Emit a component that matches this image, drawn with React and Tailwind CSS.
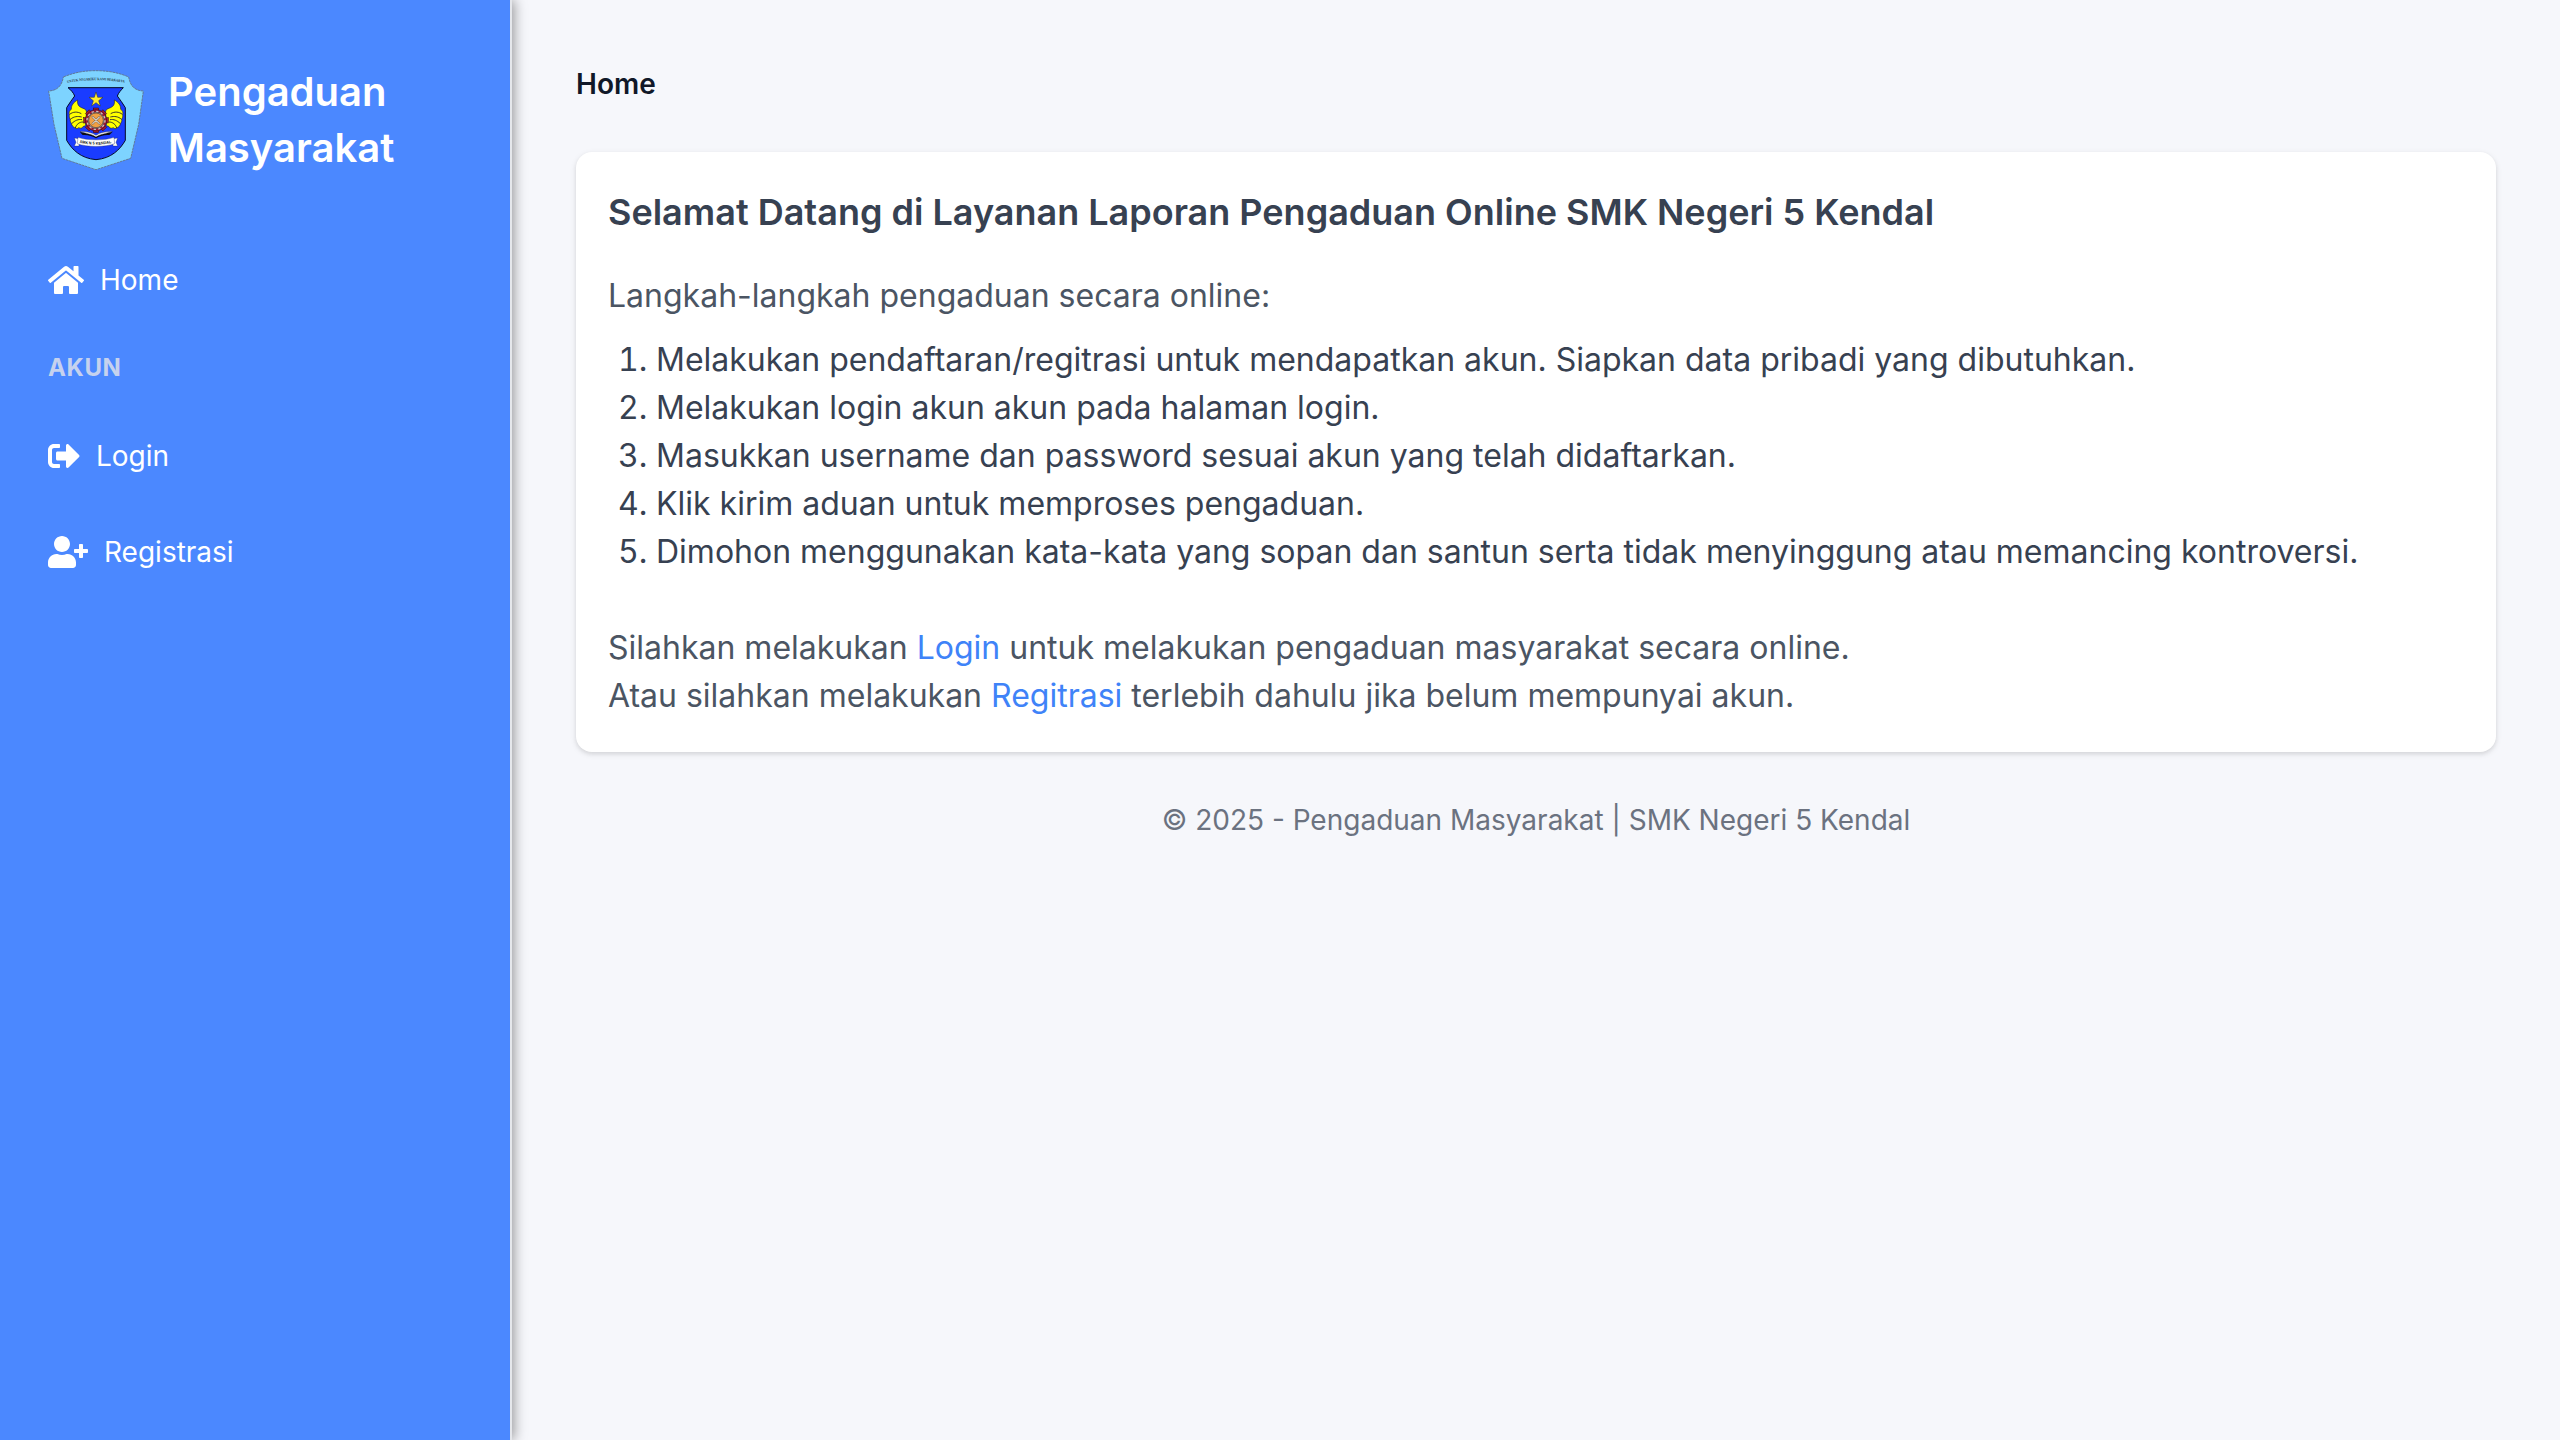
import { FaHome, FaSignOutAlt, FaUserPlus } from "react-icons/fa";

function Feathers() {
  return (
    <g fill="#ffff00" stroke="#1b1b2f" strokeWidth="1.8" strokeLinejoin="round">
      <path d="M113 119 C101 125 93 136 94 147 C88 150 86 157 88 163 C87 168 88 173 91 177 C90 181 91 185 94 189 C95 196 100 200 105 203 C109 206 114 205 116 202 C123 206 128 202 130 198 C136 198 138 193 137 189 L139 162 C140 155 140 148 132 145 C122 141 110 138 113 119 Z" />
      <path d="M89 162 C99 154 112 153 124 160 M91 177 C102 168 113 167 125 170 M95 190 C105 180 115 176 126 178 M106 203 C109 192 118 185 129 185" fill="none" strokeWidth="2.6" />
    </g>
  );
}

function Crest() {
  const teeth = [0, 45, 90, 135, 180, 225, 270, 315];
  return (
    <svg viewBox="24 29 288 300" className="h-[100px] w-24 shrink-0" aria-label="SMK N 5 Kendal">
      <path
        d="M70 50 C102 37 130 31 167 31 C204 31 236 37 266 50 C270 76 284 91 310 92 L296 192 L272 294 L168 328 L66 294 L42 192 L26 92 C52 91 66 76 70 50 Z"
        fill="#7dd3ff"
        stroke="#5f7080"
        strokeWidth="2.4"
        strokeDasharray="8 2"
      />
      <path id="motto" d="M82 68 C130 57 206 57 256 68" fill="none" />
      <text fontSize="11" fontFamily="Liberation Serif, serif" fontWeight="700" fill="#1f3344">
        <textPath href="#motto" textLength="172" lengthAdjust="spacingAndGlyphs">UNTUK NEGARIKU KAMI BERKARYA</textPath>
      </text>
      <path
        d="M84 82 L250 82 C244 88 235 98 232 107 C240 119 249 129 256 142 L256 240 C240 268 214 294 168 298 C122 294 96 268 80 240 L80 142 C87 129 96 119 104 107 C101 98 92 88 84 82 Z"
        fill="#1a3cff"
        stroke="#050a28"
        strokeWidth="3"
      />
      <path d="M168 95 L173 111 L189 111 L176 121 L181 137 L168 127 L155 137 L160 121 L147 111 L163 111 Z" fill="#ffee2e" stroke="#2b2b20" strokeWidth="1.5" />
      <Feathers />
      <g transform="translate(336 0) scale(-1 1)">
        <Feathers />
      </g>
      <g stroke="#1a0a12" strokeWidth="1.5">
        <g fill="#a81c34">
          {teeth.map((a) => (
            <rect key={a} x="160" y="143" width="16" height="12" transform={`rotate(${a} 168 180)`} />
          ))}
        </g>
        <circle cx="168" cy="180" r="32" fill="#a81c34" />
        <circle cx="168" cy="180" r="25" fill="#b9b4b0" />
        <circle cx="168" cy="180" r="22" fill="#f0a044" />
      </g>
      <circle cx="168" cy="180" r="27" fill="none" stroke="#c9c4c0" strokeWidth="4" strokeDasharray="7 7.1" />
      <path d="M158 170 L178 190 M178 170 L158 190" stroke="#7a5a3c" strokeWidth="6" strokeLinecap="round" />
      <path d="M158 170 L178 190 M178 170 L158 190" stroke="#d3cec6" strokeWidth="3.5" strokeLinecap="round" />
      <path d="M120 216 C136 215 156 218 168 226 C180 218 200 215 217 216 L208 224 C192 223 178 227 168 234 C158 227 144 223 128 224 Z" fill="#0b0b14" />
      <path d="M120 214 C138 213 156 216 168 225 C180 216 200 213 217 214 C200 219 180 221 168 230 C156 221 138 219 120 214 Z" fill="#ffffff" stroke="#0b0b14" strokeWidth="1" />
      <path d="M103 233 L117 235 L117 257 L103 257 L108 246 Z M233 233 L219 235 L219 257 L233 257 L228 246 Z" fill="#ffffff" stroke="#0b1450" strokeWidth="1" />
      <path d="M114 231 C140 241 196 241 222 231 L224 250 C196 261 140 261 112 250 Z" fill="#ffffff" stroke="#0b1450" strokeWidth="1" />
      <path id="ribbon" d="M119 247 C144 255 192 255 217 247" fill="none" />
      <text fontSize="12" fontFamily="Liberation Sans, sans-serif" fontWeight="700" fill="#111111">
        <textPath href="#ribbon" textLength="96" lengthAdjust="spacingAndGlyphs">SMK N 5 KENDAL</textPath>
      </text>
    </svg>
  );
}

function NavItem({ icon: Icon, width, label }) {
  return (
    <a href="#" className="flex h-10 items-center gap-4 text-[28px] leading-10 text-white">
      <Icon className={`h-8 ${width} shrink-0`} />
      <span>{label}</span>
    </a>
  );
}

const steps = [
  "Melakukan pendaftaran/regitrasi untuk mendapatkan akun. Siapkan data pribadi yang dibutuhkan.",
  "Melakukan login akun akun pada halaman login.",
  "Masukkan username dan password sesuai akun yang telah didaftarkan.",
  "Klik kirim aduan untuk memproses pengaduan.",
  "Dimohon menggunakan kata-kata yang sopan dan santun serta tidak menyinggung atau memancing kontroversi.",
];

export default function App() {
  return (
    <div className="flex h-[1440px] w-[2560px] overflow-hidden bg-[#f6f7fb] font-['Inter',sans-serif]">
      <aside className="z-10 w-[512px] shrink-0 border-r-2 border-[#e5e7eb] bg-[#4b88ff] px-12 pt-16 shadow-[2px_0_12px_0_rgba(0,0,0,0.4)]">
        <div className="flex items-center gap-6">
          <Crest />
          <div className="text-[40px] leading-14 font-semibold text-white">Pengaduan Masyarakat</div>
        </div>
        <nav className="mt-[84px]">
          <NavItem icon={FaHome} width="w-9" label="Home" />
          <h2 className="mt-[52px] text-2xl leading-8 font-bold tracking-wide text-[#c6d2ee] uppercase">Akun</h2>
          <div className="mt-[52px] flex flex-col gap-14">
            <NavItem icon={FaSignOutAlt} width="w-8" label="Login" />
            <NavItem icon={FaUserPlus} width="w-10" label="Registrasi" />
          </div>
        </nav>
      </aside>
      <main className="flex-1 px-16 pt-16">
        <div className="text-[28px] leading-10 font-semibold text-gray-900">Home</div>
        <section className="mt-12 rounded-2xl bg-white p-8 text-[32px] leading-12 text-[#4b5563] shadow-[0_2px_6px_0_rgba(0,0,0,0.1),0_2px_4px_0_rgba(0,0,0,0.06)]">
          <h1 className="text-4xl leading-14 font-semibold text-[#374151]">
            Selamat Datang di Layanan Laporan Pengaduan Online SMK Negeri 5 Kendal
          </h1>
          <p className="mt-8">Langkah-langkah pengaduan secara online:</p>
          <ol className="mt-4 list-decimal pl-12 text-[#374151]">
            {steps.map((s) => (
              <li key={s}>{s}</li>
            ))}
          </ol>
          <p className="mt-12">
            Silahkan melakukan <a href="#" className="text-[#3f83f8]">Login</a> untuk melakukan pengaduan masyarakat secara online.
            <br />
            Atau silahkan melakukan <a href="#" className="text-[#3f83f8]">Regitrasi</a> terlebih dahulu jika belum mempunyai akun.
          </p>
        </section>
        <footer className="mt-12 text-center text-[28px] leading-10 text-[#6b7280]">
          © 2025 - Pengaduan Masyarakat | SMK Negeri 5 Kendal
        </footer>
      </main>
    </div>
  );
}
